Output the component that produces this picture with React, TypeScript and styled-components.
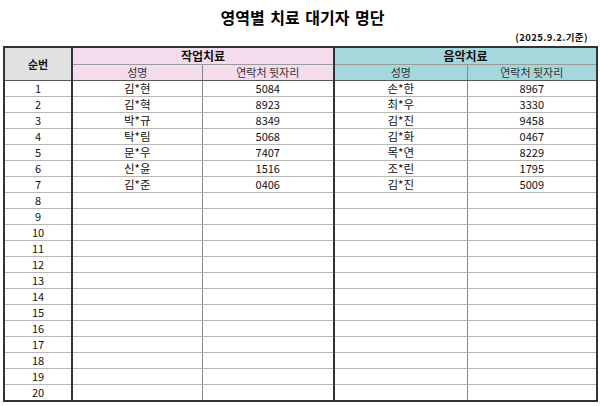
import styled, { createGlobalStyle } from 'styled-components';

const GlobalStyle = createGlobalStyle`
  html, body {
    margin: 0;
    padding: 0;
    background: #ffffff;
  }
  body {
    font-family: "Noto Sans CJK KR", "Noto Sans", sans-serif;
    color: #111;
  }
`;

type Person = { name: string; phone: string };

const occupational: Person[] = [
  { name: '김*현', phone: '5084' },
  { name: '김*혁', phone: '8923' },
  { name: '박*규', phone: '8349' },
  { name: '탁*림', phone: '5068' },
  { name: '문*우', phone: '7407' },
  { name: '신*윤', phone: '1516' },
  { name: '김*준', phone: '0406' },
];

const music: Person[] = [
  { name: '손*한', phone: '8967' },
  { name: '최*우', phone: '3330' },
  { name: '김*진', phone: '9458' },
  { name: '김*화', phone: '0467' },
  { name: '목*연', phone: '8229' },
  { name: '조*린', phone: '1795' },
  { name: '김*진', phone: '5009' },
];

const rows = Array.from({ length: 20 }, (_, i) => i + 1);

function App() {
  return (
    <>
      <GlobalStyle />
      <Page>
        <Title>영역별 치료 대기자 명단</Title>
        <DateNote>(2025.9.2.기준)</DateNote>
        <Table>
          <colgroup>
            <col style={{ width: 68 }} />
            <col style={{ width: 130 }} />
            <col style={{ width: 132 }} />
            <col style={{ width: 133 }} />
            <col style={{ width: 130 }} />
          </colgroup>
          <thead>
            <tr>
              <NoHead rowSpan={2}>순번</NoHead>
              <GroupHead colSpan={2} $tone="pink">작업치료</GroupHead>
              <GroupHead colSpan={2} $tone="teal">음악치료</GroupHead>
            </tr>
            <tr>
              <SubHead $tone="pink">성명</SubHead>
              <SubHead $tone="pink" $edge>연락처 뒷자리</SubHead>
              <SubHead $tone="teal">성명</SubHead>
              <SubHead $tone="teal">연락처 뒷자리</SubHead>
            </tr>
          </thead>
          <tbody>
            {rows.map((n, i) => (
              <Row key={n} $last={n === rows.length}>
                <NoCell>{n}</NoCell>
                <NameCell>{occupational[i]?.name ?? ''}</NameCell>
                <PhoneCell $edge>{occupational[i]?.phone ?? ''}</PhoneCell>
                <NameCell>{music[i]?.name ?? ''}</NameCell>
                <PhoneCell>{music[i]?.phone ?? ''}</PhoneCell>
              </Row>
            ))}
          </tbody>
        </Table>
      </Page>
    </>
  );
}

const Page = styled.div`
  width: 600px;
  height: 406px;
  box-sizing: border-box;
  padding: 7px 4px 0 3px;
  display: flex;
  flex-direction: column;
`;

const Title = styled.h1`
  margin: 0;
  text-align: center;
  font-size: 16px;
  line-height: 20px;
  font-weight: 700;
  word-spacing: 2px;
  padding-left: 6px;
  color: #000;
`;

const DateNote = styled.div`
  align-self: flex-end;
  margin: 3px 8px 0 0;
  font-size: 9.5px;
  line-height: 14px;
  font-weight: 700;
  letter-spacing: 0.4px;
`;

const Table = styled.table`
  margin-top: 2px;
  width: 593px;
  table-layout: fixed;
  border-collapse: collapse;
  border: 2px solid #333;
  font-size: 11px;
  color: #111;

  td, th {
    padding: 0;
    text-align: center;
    overflow: hidden;
    white-space: nowrap;
  }
`;

const tones = {
  pink: '#f5dcec',
  teal: '#a5d8dc',
};

const NoHead = styled.th`
  background: #e1e1e1;
  font-weight: 700;
  font-size: 11px;
  border-right: 2px solid #333;
  border-bottom: 1px solid #555;
`;

const GroupHead = styled.th<{ $tone: 'pink' | 'teal' }>`
  height: 16px;
  background: ${(p) => tones[p.$tone]};
  font-weight: 700;
  font-size: 12px;
  line-height: 16px;
  border-bottom: 1px solid #9a9a9a;
  border-right: 2px solid #333;
`;

const SubHead = styled.th<{ $tone: 'pink' | 'teal'; $edge?: boolean }>`
  height: 15px;
  background: ${(p) => tones[p.$tone]};
  font-weight: 400;
  font-size: 11px;
  line-height: 15px;
  color: #333;
  border-bottom: 1px solid #555;
  border-right: ${(p) => (p.$edge ? '2px solid #333' : '1px solid #8a8a8a')};
`;

const Row = styled.tr<{ $last?: boolean }>`
  height: 16px;
  td {
    border-bottom: ${(p) => (p.$last ? 'none' : '1px solid #b8b8b8')};
    line-height: 15px;
  }
`;

const NoCell = styled.td`
  border-right: 2px solid #333;
`;

const NameCell = styled.td`
  border-right: 1px solid #8a8a8a;
  font-size: 11.5px;
`;

const PhoneCell = styled.td<{ $edge?: boolean }>`
  border-right: ${(p) => (p.$edge ? '2px solid #333' : 'none')};
  font-size: 11px;
`;

export default App;
